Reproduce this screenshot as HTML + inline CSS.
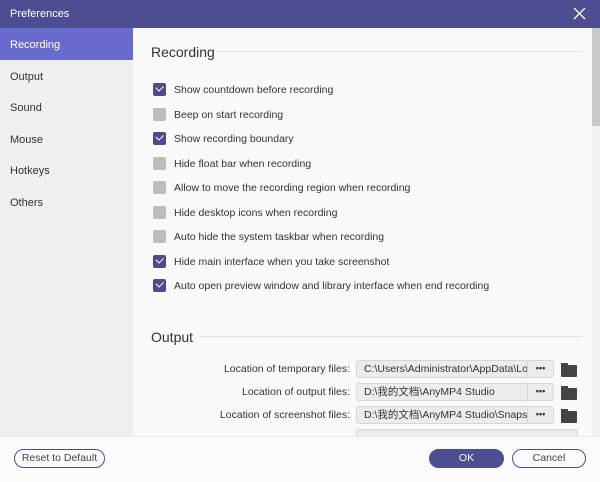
<!DOCTYPE html>
<html><head><meta charset="utf-8"><style>
*{margin:0;padding:0;box-sizing:border-box}
body{width:600px;height:482px;position:relative;overflow:hidden;background:#f9f9f9;font-family:"Liberation Sans","Noto Sans CJK SC",sans-serif;color:#333}
.title{position:absolute;left:0;top:0;width:600px;height:28px;background:#4d4d92;color:#fff;font-size:11px;line-height:29px;padding-left:10px}
.x{position:absolute;right:14px;top:7px;width:13px;height:13px}
.side{position:absolute;left:0;top:28px;width:133px;height:408px;background:#efefef}
.side div{height:31.6px;line-height:34px;padding-left:10px;font-size:11px;color:#333}
.side .sel{background:#6a6acc;color:#fff}
.h{position:absolute;left:151px;font-size:14px;color:#333}
.line{position:absolute;height:1px;background:#e2e2e2}
.cb{position:absolute;left:153px;width:13px;height:13px;border-radius:2px;background:#bdbdbd}
.cb.on{background:#4b4b8e}
.cb.on:after{content:"";position:absolute;left:3px;top:2px;width:6px;height:3.5px;border-left:1.6px solid #fff;border-bottom:1.6px solid #fff;transform:rotate(-45deg)}
.t{position:absolute;left:174px;font-size:10.5px;color:#333;line-height:14px}
.lbl{position:absolute;right:250px;font-size:10.5px;color:#333;text-align:right}
.fld{position:absolute;left:356px;width:198px;height:18px;border:1px solid #d6d6d6;border-radius:3px;background:#ececec;font-size:10.5px;line-height:16px;padding-left:7px;overflow:hidden;white-space:nowrap}
.fld .d{position:absolute;right:0;top:0;width:26px;height:16px;border-left:1px solid #d6d6d6;background:#ececec;font-size:9px;text-align:center;font-weight:bold;line-height:14px}
.fo{position:absolute;left:561px;width:16px;height:12px;background:#444;border-radius:1px}
.fo:before{content:"";position:absolute;left:0;top:-2px;width:7px;height:3px;background:#444}
.scr{position:absolute;left:592px;top:28px;width:8px;height:408px;background:#f2f2f2}
.scr div{height:98px;background:#cacaca}
.bot{position:absolute;left:0;top:436px;width:600px;height:46px;background:#fbfbfb;border-top:1px solid #e8e8e8}
.btn{position:absolute;top:449px;height:19px;border:1.5px solid #4d4d92;border-radius:10px;font-size:10.5px;line-height:17px;text-align:center}
</style></head><body>
<div class="title">Preferences
<svg class="x" viewBox="0 0 13 13"><path d="M1 1L12 12M12 1L1 12" stroke="#fff" stroke-width="1.3"/></svg></div>
<div class="side"><div class="sel">Recording</div><div>Output</div><div>Sound</div><div>Mouse</div><div>Hotkeys</div><div>Others</div></div>
<div class="h" style="top:44px">Recording</div><div class="line" style="left:216px;top:51px;width:366px"></div>
<div class="cb on" style="top:83px"></div><div class="t" style="top:83px">Show countdown before recording</div>
<div class="cb" style="top:108px"></div><div class="t" style="top:108px">Beep on start recording</div>
<div class="cb on" style="top:132px"></div><div class="t" style="top:132px">Show recording boundary</div>
<div class="cb" style="top:157px"></div><div class="t" style="top:157px">Hide float bar when recording</div>
<div class="cb" style="top:181px"></div><div class="t" style="top:181px">Allow to move the recording region when recording</div>
<div class="cb" style="top:206px"></div><div class="t" style="top:206px">Hide desktop icons when recording</div>
<div class="cb" style="top:230px"></div><div class="t" style="top:230px">Auto hide the system taskbar when recording</div>
<div class="cb on" style="top:255px"></div><div class="t" style="top:255px">Hide main interface when you take screenshot</div>
<div class="cb on" style="top:279px"></div><div class="t" style="top:279px">Auto open preview window and library interface when end recording</div>
<div class="h" style="top:329px">Output</div><div class="line" style="left:200px;top:336px;width:382px"></div>
<div class="lbl" style="top:363px">Location of temporary files:</div>
<div class="fld" style="top:360px">C:\Users\Administrator\AppData\Lo<div class="d">•••</div></div><div class="fo" style="top:365px"></div>
<div class="lbl" style="top:386px">Location of output files:</div>
<div class="fld" style="top:383px">D:\我的文档\AnyMP4 Studio<div class="d">•••</div></div><div class="fo" style="top:388px"></div>
<div class="lbl" style="top:409px">Location of screenshot files:</div>
<div class="fld" style="top:406px">D:\我的文档\AnyMP4 Studio\Snaps<div class="d">•••</div></div><div class="fo" style="top:411px"></div>
<div class="fld" style="top:429px;width:222px"></div>
<div class="scr"><div></div></div>
<div class="bot"></div>
<div class="btn" style="left:14px;width:91px;color:#444">Reset to Default</div>
<div class="btn" style="left:429px;width:75px;background:#4d4d92;color:#fff">OK</div>
<div class="btn" style="left:512px;width:74px;color:#444">Cancel</div>
</body></html>
